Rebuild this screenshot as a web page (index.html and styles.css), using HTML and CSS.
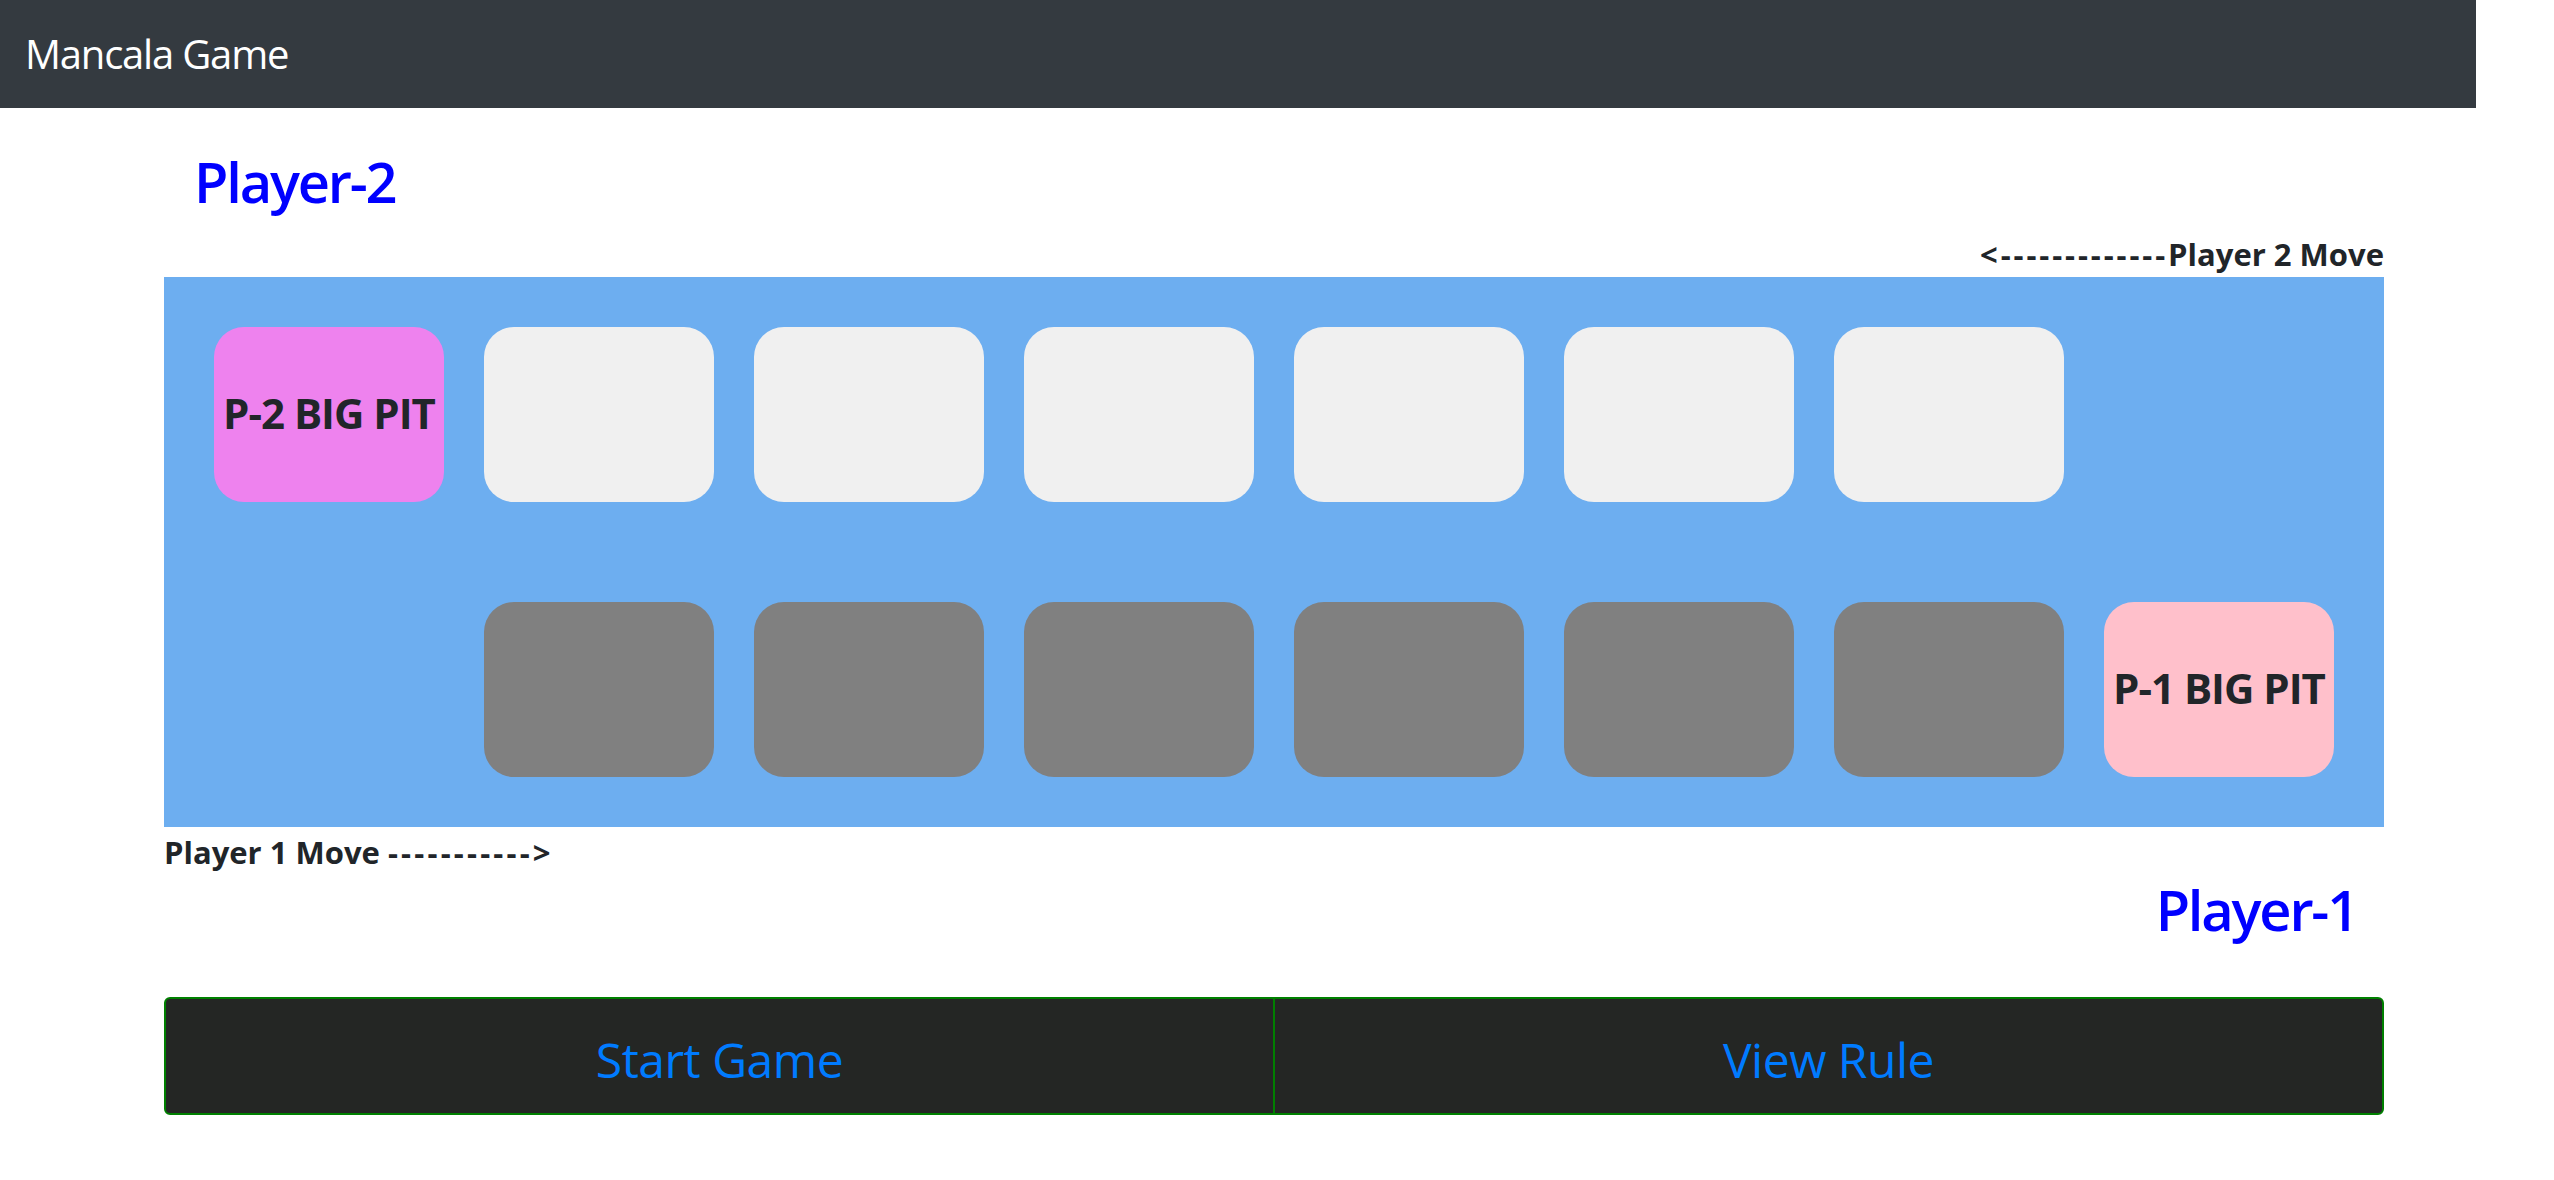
FILE: index.html
```html
<!DOCTYPE html>
<html lang="en">
<head>
<meta charset="utf-8">
<title>Mancala Game</title>
<link rel="stylesheet" href="styles.css">
</head>
<body>
<nav class="navbar">
  <span class="brand">Mancala Game</span>
</nav>
<main class="container">
  <h2 class="player player-two">Player-2</h2>
  <div class="move move-two"><span class="dashes">&lt;-------------</span>Player 2 Move</div>
  <section class="board">
    <div class="pit big-two">P-2 BIG PIT</div>
    <div class="pit light"></div>
    <div class="pit light"></div>
    <div class="pit light"></div>
    <div class="pit light"></div>
    <div class="pit light"></div>
    <div class="pit light"></div>
    <div class="pit empty"></div>
    <div class="pit empty"></div>
    <div class="pit dark"></div>
    <div class="pit dark"></div>
    <div class="pit dark"></div>
    <div class="pit dark"></div>
    <div class="pit dark"></div>
    <div class="pit dark"></div>
    <div class="pit big-one">P-1 BIG PIT</div>
  </section>
  <div class="move move-one">Player 1 Move <span class="dashes">-----------&gt;</span></div>
  <h2 class="player player-one">Player-1</h2>
  <div class="btn-group">
    <button class="btn btn-left">Start Game</button>
    <button class="btn btn-right">View Rule</button>
  </div>
</main>
</body>
</html>
```

FILE: styles.css
```css
html, body {
  margin: 0;
  padding: 0;
  background: #ffffff;
}

body {
  font-family: "Open Sans", "Noto Sans", sans-serif;
  color: #212529;
}

.navbar {
  width: 2476px;
  height: 108px;
  background: #343a40;
  display: flex;
  align-items: center;
  padding: 0 0 2px 25px;
  box-sizing: border-box;
}

.brand {
  color: #ffffff;
  font-size: 40px;
  letter-spacing: -1.2px;
}

.container {
  width: 2220px;
  margin-left: 164px;
  display: flex;
  flex-direction: column;
}

.player {
  margin: 0;
  font-size: 56px;
  line-height: 68px;
  font-weight: 600;
  color: #0000ff;
  letter-spacing: -2.2px;
}

.player-two {
  margin-top: 39px;
  padding-left: 30px;
}

.player-one {
  text-align: right;
  padding-right: 27px;
}

.move {
  font-size: 31px;
  line-height: 46px;
  font-weight: 700;
  color: #212529;
}

.move .dashes {
  letter-spacing: 2.9px;
}

.move-two {
  margin-top: 16px;
  text-align: right;
}

.move-one {
  margin-top: 2px;
}

.move-one .dashes {
  letter-spacing: 3.2px;
}

.board {
  background: #6daef0;
  padding: 50px;
  display: grid;
  grid-template-columns: repeat(8, 230px);
  grid-auto-rows: 175px;
  column-gap: 40px;
  row-gap: 100px;
}

.pit {
  border-radius: 30px;
  display: flex;
  align-items: center;
  justify-content: center;
  font-size: 42px;
  font-weight: 700;
  letter-spacing: -1px;
  color: #212529;
  white-space: nowrap;
  padding-bottom: 5px;
  box-sizing: border-box;
}

.pit.light { background: #f0f0f0; }
.pit.dark { background: #808080; }
.pit.empty { background: transparent; }
.pit.big-two { background: #ee82ee; }
.pit.big-one { background: #ffc0cb; }

.btn-group {
  margin-top: 54px;
  display: flex;
}

.btn {
  flex: 1;
  height: 118px;
  background: #242624;
  border: 2px solid #008000;
  color: #007bff;
  font-family: "Open Sans", "Noto Sans", sans-serif;
  font-size: 48px;
  padding: 6px 0 0 0;
  letter-spacing: -0.5px;
}

.btn-left {
  border-radius: 6px 0 0 6px;
}

.btn-right {
  margin-left: -2px;
  border-radius: 0 6px 6px 0;
}
```
